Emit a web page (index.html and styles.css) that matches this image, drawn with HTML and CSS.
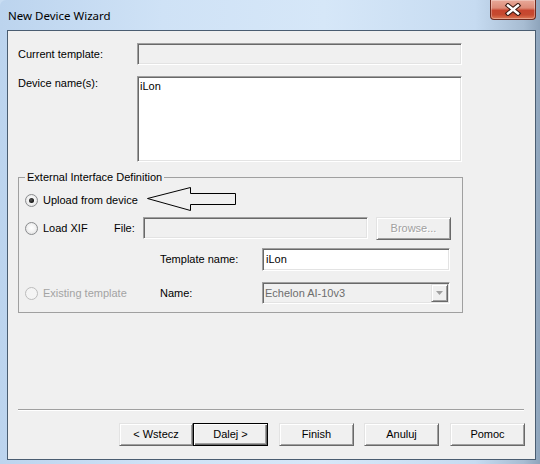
FILE: index.html
```html
<!DOCTYPE html>
<html lang="en">
<head>
<meta charset="utf-8">
<title>New Device Wizard</title>
<link rel="stylesheet" href="styles.css">
</head>
<body>
<div class="window">
  <header class="titlebar">
    <span class="title">New Device Wizard</span>
    <div class="close" aria-label="Close">
      <svg width="18" height="13" viewBox="0 0 18 13">
        <path d="M4 2.5 L14 10.5 M14 2.5 L4 10.5" stroke="#3b1a12" stroke-width="4.6" stroke-linecap="square" fill="none"/>
        <path d="M4 2.5 L14 10.5 M14 2.5 L4 10.5" stroke="#ffffff" stroke-width="2.4" stroke-linecap="square" fill="none"/>
      </svg>
    </div>
  </header>
  <main class="client">
    <div class="form-row row-template">
      <span class="lbl">Current template:</span>
      <div class="edit disabled"></div>
    </div>
    <div class="form-row row-names">
      <span class="lbl">Device name(s):</span>
      <div class="edit multiline">iLon</div>
    </div>
    <fieldset class="group">
      <legend>External Interface Definition</legend>
      <div class="g-row row-upload">
        <span class="opt"><span class="radio"><span class="dot"></span></span>Upload from device</span>
        <svg class="arrow" width="90" height="26" viewBox="0 0 90 26">
          <polygon points="0.5,11.5 43.5,0.5 43.5,6.5 88.5,6.5 88.5,17.5 43.5,17.5 43.5,23.5" fill="none" stroke="#000" stroke-width="1"/>
        </svg>
      </div>
      <div class="g-row row-xif">
        <span class="opt"><span class="radio"></span>Load XIF</span>
        <span class="lbl lbl-file">File:</span>
        <div class="edit disabled file"></div>
        <div class="btn browse">Browse...</div>
      </div>
      <div class="g-row row-tname">
        <span class="spacer"></span>
        <span class="lbl lbl-mid">Template name:</span>
        <div class="edit tname">iLon</div>
      </div>
      <div class="g-row row-existing">
        <span class="opt opt-disabled"><span class="radio radio-disabled"></span>Existing template</span>
        <span class="lbl lbl-mid">Name:</span>
        <div class="edit combo">
          <span class="combo-text">Echelon AI-10v3</span>
          <span class="combo-btn">
            <svg width="7" height="4" viewBox="0 0 7 4"><polygon points="0,0 7,0 3.5,4" fill="#a0a0a0"/></svg>
          </span>
        </div>
      </div>
    </fieldset>
    <div class="separator"></div>
    <div class="buttons">
      <div class="btn back">&lt; Wstecz</div>
      <div class="btn default">Dalej &gt;</div>
      <div class="btn finish">Finish</div>
      <div class="btn cancel">Anuluj</div>
      <div class="btn help">Pomoc</div>
    </div>
  </main>
</div>
</body>
</html>
```
FILE: styles.css
```css
* { box-sizing: border-box; }
html, body { margin: 0; padding: 0; }
body {
  width: 540px;
  height: 464px;
  overflow: hidden;
  font-family: "Liberation Sans", Arial, sans-serif;
  font-size: 11px;
  line-height: 13px;
  color: #000;
  background: #c8ddf3;
}
.window {
  width: 540px;
  height: 464px;
  display: flex;
  flex-direction: column;
  border-top-left-radius: 6px;
  background: linear-gradient(to right, #bcd4ee 0%, #cfe2f6 30%, #d6e7f8 60%, #c6dbf1 88%, #a7bcd2 97%, #8ea4bb 100%);
}
.titlebar {
  height: 30px;
  flex: none;
  display: flex;
  align-items: flex-start;
}
.title {
  font-family: "Noto Sans", "Liberation Sans", sans-serif;
  font-size: 11.5px;
  line-height: 16px;
  margin: 8px 0 0 8px;
  color: #000;
}
.close {
  margin-left: auto;
  margin-right: 4px;
  width: 46px;
  height: 20px;
  display: flex;
  align-items: center;
  justify-content: center;
  border: 1px solid #6e2a1f;
  border-top: none;
  border-radius: 0 0 4px 4px;
  background: linear-gradient(to bottom, #e8a999 0%, #dc8b78 42%, #c7452e 55%, #c64a30 78%, #dd7a57 100%);
  box-shadow: inset 0 0 0 1px rgba(255, 255, 255, 0.3);
}
.client {
  margin-left: 7px;
  width: 529px;
  height: 430px;
  flex: none;
  border: 1px solid #4a5d71;
  background: #f0f0f0;
}
.form-row {
  display: grid;
  grid-template-columns: 119px 325px;
  margin-left: 10px;
}
.row-template { margin-top: 12px; height: 22px; }
.row-template .lbl { padding-top: 5px; }
.row-names { margin-top: 11px; height: 86px; }
.row-names .lbl { padding-top: 1px; }
.edit {
  border: 1px solid;
  border-color: #a0a0a0 #ffffff #ffffff #a0a0a0;
  box-shadow: inset 1px 1px 0 #696969, inset -1px -1px 0 #e3e3e3;
  background: #fff;
}
.edit.disabled { background: #f0f0f0; }
.multiline { padding: 3px 0 0 2px; }
.group {
  margin: 9px 0 0 10px;
  width: 445px;
  min-width: 0;
  padding: 5px 6px 8px 6px;
  border: 1px solid #a0a0a0;
}
.group legend {
  padding: 0 2px;
  font-size: 11px;
  line-height: 13px;
}
.g-row { display: flex; align-items: center; }
.row-upload { height: 22px; }
.row-xif { height: 24px; margin-top: 5px; }
.row-tname { height: 23px; margin-top: 8px; }
.row-existing { height: 22px; margin-top: 11px; }
.opt { display: flex; align-items: center; flex: none; }
.row-upload .opt { width: 122px; }
.row-xif .opt { width: 89px; }
.row-existing .opt { width: 135px; }
.spacer { width: 135px; flex: none; }
.radio {
  width: 13px;
  height: 13px;
  flex: none;
  margin-right: 5px;
  border-radius: 50%;
  border: 1px solid #8a8c8e;
  background: radial-gradient(circle at 50% 45%, #ffffff 0%, #f3f3f3 45%, #d6d6d6 100%);
  display: flex;
  align-items: center;
  justify-content: center;
}
.dot {
  width: 5px;
  height: 5px;
  border-radius: 50%;
  background: radial-gradient(circle at 40% 40%, #555 0%, #111 70%);
}
.radio-disabled {
  border-color: #bcbcbc;
  background: #f4f4f4;
}
.opt-disabled { color: #a3a3a3; }
.arrow { flex: none; display: block; }
.lbl-file { width: 29px; flex: none; }
.lbl-mid { width: 102px; flex: none; }
.file { width: 225px; height: 22px; flex: none; }
.browse {
  width: 75px;
  height: 24px;
  margin-left: 8px;
  color: #a0a0a0;
  text-shadow: 1px 1px 0 #ffffff;
}
.tname {
  width: 188px;
  height: 23px;
  flex: none;
  display: flex;
  align-items: center;
  padding-left: 3px;
}
.combo {
  width: 188px;
  height: 22px;
  flex: none;
  display: flex;
  align-items: stretch;
  padding: 1px;
  background: #f0f0f0;
}
.combo-text {
  flex: 1;
  display: flex;
  align-items: center;
  padding-left: 1px;
  color: #6d6d6d;
}
.combo-btn {
  width: 17px;
  flex: none;
  display: flex;
  align-items: center;
  justify-content: center;
  background: #f0f0f0;
  border: 1px solid;
  border-color: #e3e3e3 #696969 #696969 #e3e3e3;
  box-shadow: inset 1px 1px 0 #fff, inset -1px -1px 0 #a0a0a0;
}
.combo-btn svg { display: block; }
.separator {
  margin: 96px 0 0 10px;
  width: 506px;
  height: 2px;
  border-top: 1px solid #a0a0a0;
  border-bottom: 1px solid #ffffff;
}
.buttons {
  display: flex;
  margin-top: 12px;
  padding-left: 111px;
}
.btn {
  width: 75px;
  height: 23px;
  flex: none;
  display: flex;
  align-items: center;
  justify-content: center;
  background: #f0f0f0;
  border: 1px solid;
  border-color: #e3e3e3 #696969 #696969 #e3e3e3;
  box-shadow: inset 1px 1px 0 #ffffff, inset -1px -1px 0 #a0a0a0;
}
.btn.back { width: 74px; }
.btn.default {
  border-color: #000;
  box-shadow: inset 1px 1px 0 #ffffff, inset -1px -1px 0 #696969, inset -2px -2px 0 #a0a0a0;
}
.btn.finish { margin-left: 11px; }
.btn.cancel { margin-left: 10px; }
.btn.help { margin-left: 11px; }
```
